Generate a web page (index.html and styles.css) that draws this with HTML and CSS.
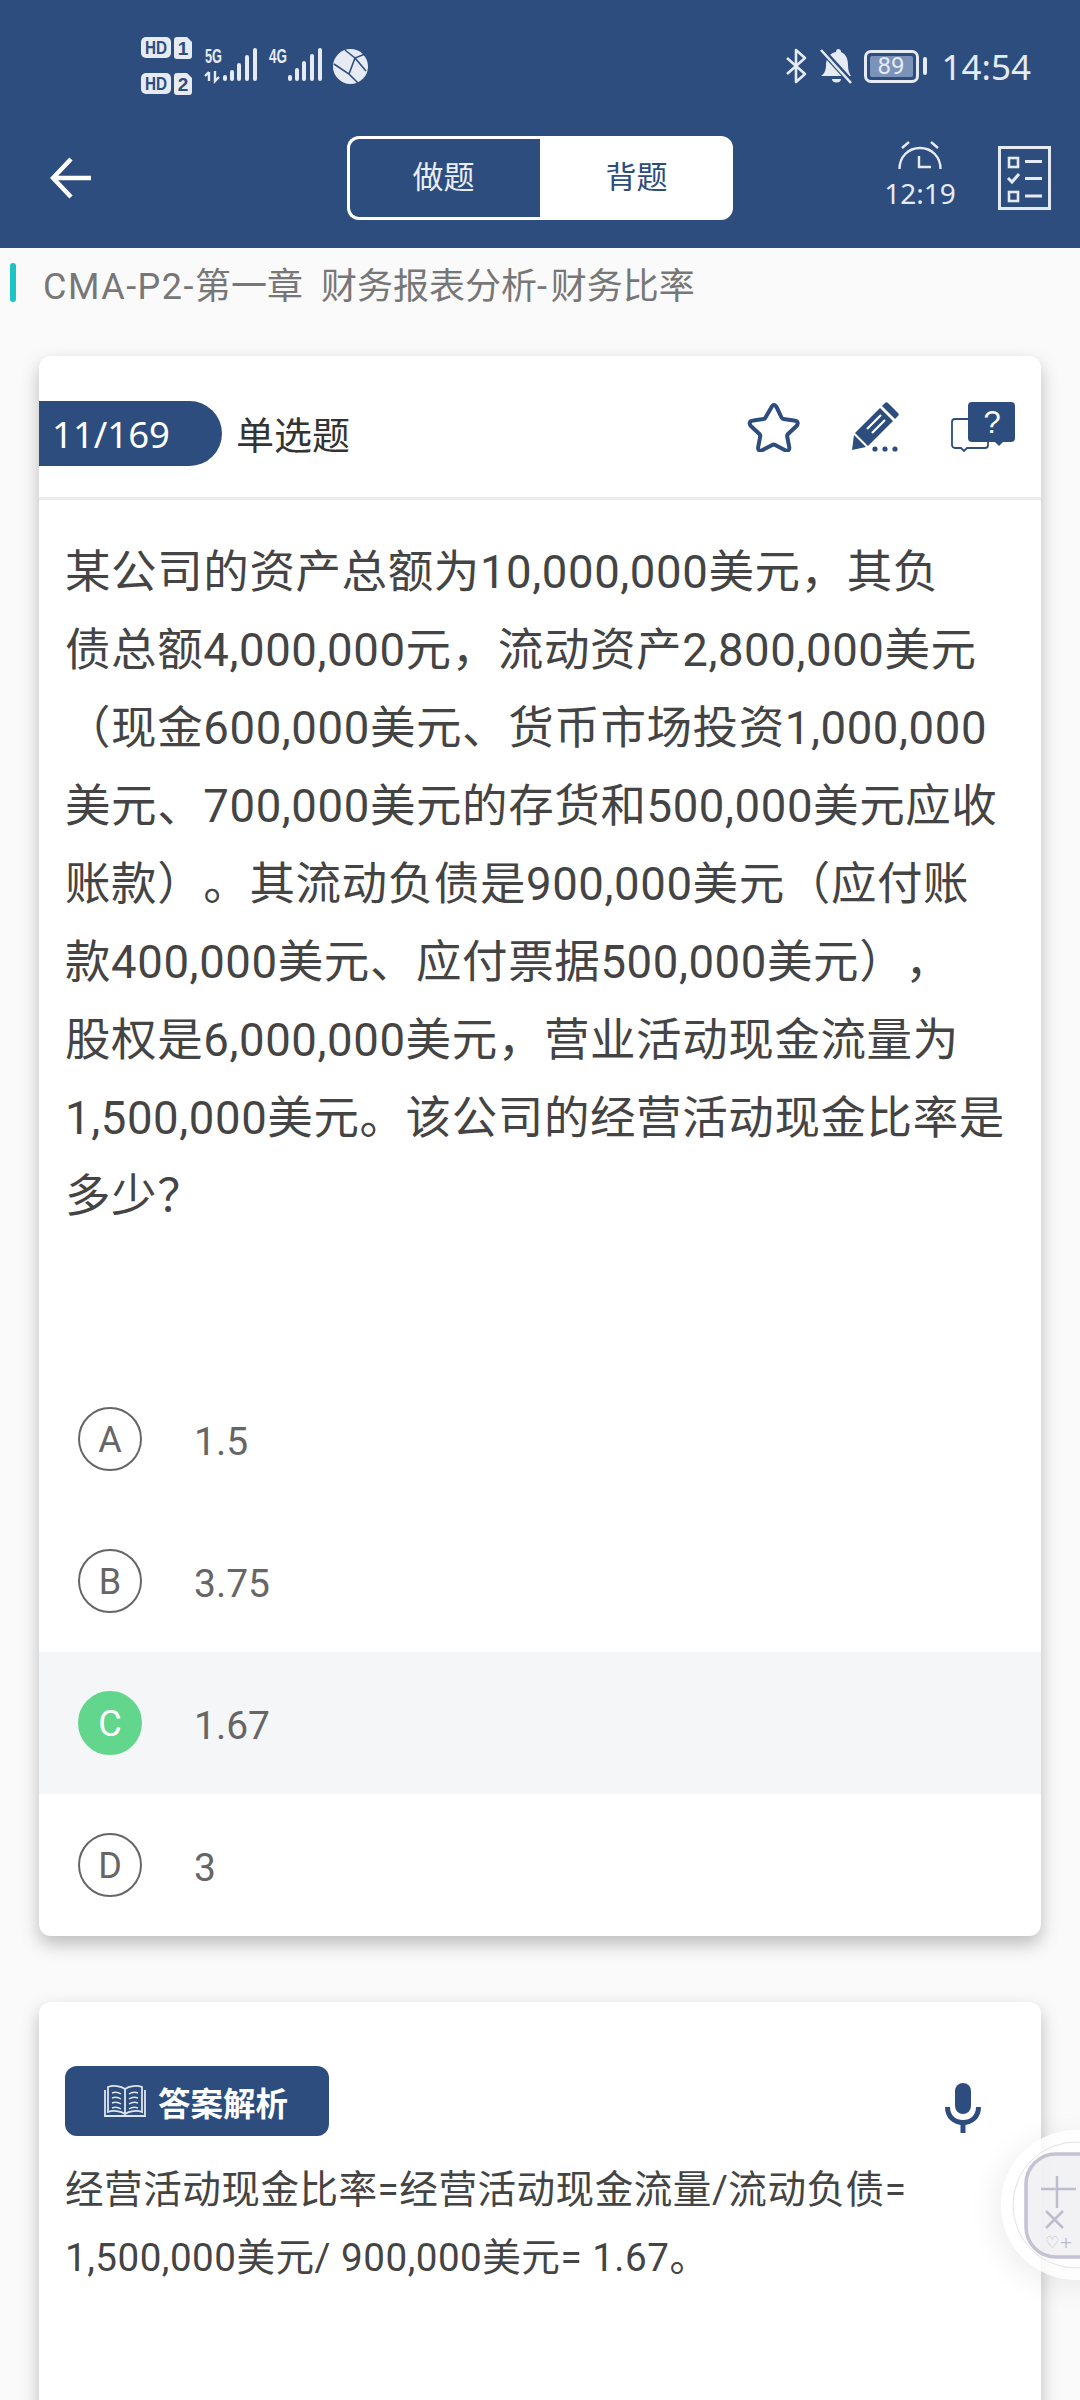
FILE: index.html
```html
<!DOCTYPE html>
<html lang="zh-CN">
<head>
  <meta charset="UTF-8" />
  <meta name="viewport" content="width=device-width, initial-scale=1.0"/>
  <title>CMA-P2 财务比率</title>
  <link rel="stylesheet" href="styles.css">
</head>
<body>
  <div class="header">
    <!-- status bar -->
    <div class="status-bar">
      <svg class="sim-badges" width="51" height="60" viewBox="0 0 51 60">
        <rect x="0" y="1" width="30" height="21" rx="5" fill="#e6eaf2"/>
        <text x="15" y="18" class="sim-text" text-anchor="middle" textLength="22" lengthAdjust="spacingAndGlyphs">HD</text>
        <path d="M36 1h10l5 5v14a3 3 0 0 1-3 3H36a3 3 0 0 1-3-3V4a3 3 0 0 1 3-3z" fill="#e6eaf2"/>
        <text x="42" y="19" class="sim-text" text-anchor="middle">1</text>
        <rect x="0" y="37" width="30" height="21" rx="5" fill="#e6eaf2"/>
        <text x="15" y="54" class="sim-text" text-anchor="middle" textLength="22" lengthAdjust="spacingAndGlyphs">HD</text>
        <path d="M36 37h10l5 5v14a3 3 0 0 1-3 3H36a3 3 0 0 1-3-3V40a3 3 0 0 1 3-3z" fill="#e6eaf2"/>
        <text x="42" y="55" class="sim-text" text-anchor="middle">2</text>
      </svg>
      <svg class="signal" width="53" height="36" viewBox="0 0 53 36">
        <text x="1" y="15" class="net-text" textLength="17" lengthAdjust="spacingAndGlyphs">5G</text>
        <path d="M5 33V24M1 28l4-4M11 23v10l4-4" fill="none" stroke="#e6eaf2" stroke-width="2.400"/>
        <rect x="19" y="27" width="4" height="6" rx="2" fill="#e6eaf2"/>
        <rect x="26" y="22" width="4" height="11" rx="2" fill="#e6eaf2"/>
        <rect x="33" y="15" width="4" height="18" rx="2" fill="#e6eaf2"/>
        <rect x="41" y="7" width="4" height="26" rx="2" fill="#e6eaf2"/>
        <rect x="49" y="0" width="4" height="33" rx="2" fill="#e6eaf2"/>
      </svg>
      <svg class="signal signal-two" width="53" height="36" viewBox="0 0 53 36">
        <text x="0" y="15" class="net-text" textLength="18" lengthAdjust="spacingAndGlyphs">4G</text>
        <rect x="19" y="27" width="4" height="6" rx="2" fill="#e6eaf2"/>
        <rect x="26" y="20" width="4" height="13" rx="2" fill="#e6eaf2"/>
        <rect x="33" y="13" width="4" height="20" rx="2" fill="#e6eaf2"/>
        <rect x="41" y="6" width="4" height="27" rx="2" fill="#e6eaf2"/>
        <rect x="49" y="0" width="4" height="33" rx="2" fill="#e6eaf2"/>
      </svg>
      <svg class="globe" width="35" height="35" viewBox="0 0 35 35">
        <circle cx="17.500" cy="17.500" r="17.500" fill="#e6eaf2"/>
        <path d="M1 15l15 10 9 9M16 25L22 9l10-4M22 9L12 1M22 9l11 13" fill="none" stroke="#2c4d7e" stroke-width="1.600"/>
      </svg>

      <div class="status-right">
        <svg class="bluetooth-icon" width="22" height="36" viewBox="0 0 22 36">
          <path d="M2 10l18 16-9 8V2l9 8L2 26" fill="none" stroke="#e6eaf2" stroke-width="2.600" stroke-linejoin="round"/>
        </svg>
        <svg class="bell-icon" width="32" height="36" viewBox="0 0 32 36">
          <path d="M1 28c3-2 5-5 5-11 0-7 4-12 10-13 0-2 1-3 2-3 2 0 3 1 3 3 5 2 7 7 7 13 0 5 1 8 3 11z" fill="#e6eaf2"/>
          <path d="M12 31h9a4.500 3.500 0 0 1-9 0z" fill="#e6eaf2"/>
          <path d="M0 0l31 34" stroke="#2c4d7e" stroke-width="6"/>
          <path d="M1 2l30 33" stroke="#e6eaf2" stroke-width="2.600"/>
        </svg>
        <div class="battery">
          <div class="battery-body"><span class="battery-level">89</span></div>
          <div class="battery-nub"></div>
        </div>
        <span class="status-time">14:54</span>
      </div>
    </div>

    <!-- toolbar -->
    <div class="toolbar">
      <svg class="back-icon" width="42" height="42" viewBox="0 0 42 42">
        <path d="M41 21H4M21 2L3 21l18 19" fill="none" stroke="#fff" stroke-width="4.500"/>
      </svg>
      <div class="mode-tabs">
        <div class="mode-tab">做题</div>
        <div class="mode-tab active">背题</div>
      </div>
      <div class="alarm">
        <svg width="44" height="30" viewBox="0 0 44 30">
          <path d="M1.500 28C1.500 16 10 7 22 7s20.500 9 20.500 21" fill="none" stroke="#e6eaf2" stroke-width="2.400"/>
          <path d="M4 7l7-6M40 7l-7-6" fill="none" stroke="#e6eaf2" stroke-width="2.400"/>
          <path d="M21 15v11h12" fill="none" stroke="#e6eaf2" stroke-width="2.400"/>
        </svg>
        <span class="alarm-time">12:19</span>
      </div>
      <svg class="list-icon" width="53" height="64" viewBox="0 0 53 64">
        <rect x="1.500" y="1.500" width="50" height="61" fill="none" stroke="#e6eaf2" stroke-width="3"/>
        <rect x="11" y="12" width="9" height="9" fill="none" stroke="#e6eaf2" stroke-width="2.600"/>
        <path d="M27 15.500h17M27 32.500h17M27 50h17" stroke="#e6eaf2" stroke-width="2.800"/>
        <path d="M10 32l4 4 7-8" fill="none" stroke="#e6eaf2" stroke-width="3"/>
        <rect x="11" y="46" width="9" height="9" fill="none" stroke="#e6eaf2" stroke-width="2.600"/>
      </svg>
    </div>
  </div>

  <div class="chapter">
    <div class="chapter-mark"></div>
    <div class="chapter-title"><span class="latin">CMA-P2-</span>第一章  财务报表分析<span class="dash">-</span>财务比率</div>
  </div>

  <div class="card question-card">
    <div class="question-head">
      <div class="question-no">11/169</div>
      <div class="question-type">单选题</div>
      <div class="question-tools">
        <svg width="54" height="50" viewBox="0 0 54 50">
          <path d="M27 3c1 0 2 1 3 3l4.500 9.500c.5 1 1 1.500 2 1.500l10.500 1.500c4 .5 5 3 2 6l-8 7.500c-.8.800-1 1.500-.8 2.500l2 10.500c.6 3.500-1.500 4.500-4 3.200l-10-5.200c-1-.5-2-.5-3 0l-10 5.200c-2.500 1.300-4.600.3-4-3.200l2-10.500c.2-1 0-1.700-.8-2.500l-8-7.500c-3-3-2-5.500 2-6L16.500 17c1 0 1.500-.5 2-1.500L24 6c1-2 2-3 3-3z" fill="none" stroke="#2c4d7e" stroke-width="4"/>
        </svg>
        <svg width="48" height="50" viewBox="0 0 48 50">
          <path d="M36 1l10 10c1 1 1 2 0 3l-3 3-13-13 3-3c1-1 2-1 3 0z" fill="#2c4d7e"/>
          <path d="M28 6l13 13-25 25-13-13z" fill="#2c4d7e"/>
          <path d="M2 33l12 12-14 3z" fill="#2c4d7e"/>
          <path d="M16 29l14-14M21 33l13-13" stroke="#fff" stroke-width="2.200" transform="translate(-1 -2)"/>
          <circle cx="23" cy="47" r="2.600" fill="#2c4d7e"/>
          <circle cx="33" cy="47" r="2.600" fill="#2c4d7e"/>
          <circle cx="43" cy="47" r="2.600" fill="#2c4d7e"/>
        </svg>
        <svg width="64" height="50" viewBox="0 0 64 50">
          <path d="M4 17h30a3 3 0 0 1 3 3v23a3 3 0 0 1-3 3H16l-3 3-3-3H4a3 3 0 0 1-3-3V20a3 3 0 0 1 3-3z" fill="#fff" stroke="#2c4d7e" stroke-width="1.800"/>
          <path d="M21 0h39a4 4 0 0 1 4 4v32a4 4 0 0 1-4 4H52l-4 4-4-4H21a4 4 0 0 1-4-4V4a4 4 0 0 1 4-4z" fill="#2c4d7e"/>
          <text x="41" y="31" class="help-mark" text-anchor="middle">?</text>
        </svg>
      </div>
    </div>

    <div class="question-text">某公司的资产总额为10,000,000美元，其负<br>债总额4,000,000元，流动资产2,800,000美元<br>（现金600,000美元、货币市场投资1,000,000<br>美元、700,000美元的存货和500,000美元应收<br>账款）。其流动负债是900,000美元（应付账<br>款400,000美元、应付票据500,000美元），<br>股权是6,000,000美元，营业活动现金流量为<br>1,500,000美元。该公司的经营活动现金比率是<br>多少？</div>

    <div class="options">
      <div class="option"><span class="option-key">A</span><span class="option-text">1.5</span></div>
      <div class="option"><span class="option-key">B</span><span class="option-text">3.75</span></div>
      <div class="option correct"><span class="option-key">C</span><span class="option-text">1.67</span></div>
      <div class="option"><span class="option-key">D</span><span class="option-text">3</span></div>
    </div>
  </div>

  <div class="card answer-card">
    <div class="answer-head">
      <div class="answer-badge">
        <svg width="42" height="34" viewBox="0 0 42 34">
          <path d="M21 5C17 2 9 1 4 3v25c5-2 13-1 17 2 4-3 12-4 17-2V3c-5-2-13-1-17 2zM21 5v25" fill="none" stroke="#dfe5ef" stroke-width="1.800"/>
          <path d="M1 6v26h40V6" fill="none" stroke="#dfe5ef" stroke-width="1.800"/>
          <path d="M8 9c3-1 6-1 9 1M8 14c3-1 6-1 9 1M8 19c3-1 6-1 9 1M8 24c3-1 6-1 9 1M34 9c-3-1-6-1-9 1M34 14c-3-1-6-1-9 1M34 19c-3-1-6-1-9 1M34 24c-3-1-6-1-9 1" fill="none" stroke="#dfe5ef" stroke-width="1.500"/>
        </svg>
        <span>答案解析</span>
      </div>
      <svg class="mic-icon" width="36" height="50" viewBox="0 0 36 50">
        <rect x="10" y="0" width="16" height="31" rx="8" fill="#2c4d7e"/>
        <path d="M2.500 24c0 10 7 15.500 15.500 15.500S33.500 34 33.500 24" fill="none" stroke="#2c4d7e" stroke-width="5"/>
        <rect x="15.500" y="38" width="5" height="12" fill="#2c4d7e"/>
      </svg>
    </div>
    <div class="answer-text">经营活动现金比率=经营活动现金流量/流动负债=<br>1,500,000美元/ 900,000美元= 1.67。</div>
  </div>

  <!-- floating tool over the page edge -->
  <div class="float-tool">
    <svg width="150" height="150" viewBox="0 0 150 150">
      <circle cx="75" cy="75" r="63" fill="none" stroke="#e3e3e6" stroke-width="1"/>
      <rect x="25" y="24" width="110" height="103" rx="30" fill="rgba(236,236,240,.7)" stroke="#c3c3d3" stroke-width="3.500"/>
      <path d="M56 46v32M40 59h35M45 81l17 17M62 81L45 98" fill="none" stroke="#bdbdce" stroke-width="2.500"/>
      <text x="44" y="118" class="float-text">♡+</text>
    </svg>
  </div>
</body>
</html>
```

FILE: styles.css
```css
html, body {
  margin: 0;
  padding: 0;
}

body {
  position: relative;
  width: 1080px;
  height: 2400px;
  overflow: hidden;
  background: #fafafa;
  font-family: Roboto, "Noto Sans CJK SC", sans-serif;
  color: #444;
  text-spacing-trim: space-all;
}

.header {
  background: #2c4d7e;
  height: 248px;
}

.status-bar {
  display: flex;
  align-items: center;
  height: 120px;
  padding: 12px 49px 0 141px;
  box-sizing: border-box;
  color: #e6eaf2;
}

.sim-text {
  font-family: "Liberation Sans", sans-serif;
  font-size: 19px;
  font-weight: 700;
  fill: #2c4d7e;
}

.net-text {
  font-family: "Liberation Sans", sans-serif;
  font-size: 20px;
  font-weight: 700;
  fill: #e6eaf2;
}

.sim-badges {
  margin-right: 12px;
  overflow: visible;
}

.signal {
  overflow: visible;
}

.signal-two {
  margin-left: 12px;
}

.globe {
  margin-left: 11px;
}

.status-right {
  display: flex;
  align-items: center;
  margin-left: auto;
}

.bell-icon {
  margin-left: 13px;
}

.battery {
  display: flex;
  align-items: center;
  margin-left: 12px;
}

.battery-body {
  display: flex;
  width: 55px;
  height: 33px;
  box-sizing: border-box;
  border: 3px solid #e6eaf2;
  border-radius: 7px;
  padding: 3px;
}

.battery-level {
  flex: 1;
  background: #7b93b8;
  border-radius: 2px;
  font-size: 24px;
  line-height: 21px;
  text-align: center;
}

.battery-nub {
  width: 4px;
  height: 18px;
  margin-left: 4px;
  border-radius: 2px;
  background: #e6eaf2;
}

.status-time {
  margin-left: 15px;
  font-family: "Noto Sans", sans-serif;
  font-size: 35px;
}

.toolbar {
  display: flex;
  align-items: center;
  height: 116px;
  padding-left: 50px;
}

.mode-tabs {
  display: flex;
  width: 386px;
  height: 84px;
  margin-left: 255px;
}

.mode-tab {
  flex: 1;
  box-sizing: border-box;
  padding-right: 3px;
  border: 3px solid #fff;
  border-right: 0;
  border-radius: 12px 0 0 12px;
  color: #e9edf4;
  font-size: 31px;
  line-height: 78px;
  text-align: center;
}

.mode-tab.active {
  padding-right: 0;
  border: 3px solid #fff;
  border-radius: 0 12px 12px 0;
  background: #fff;
  color: #2c4d7e;
}

.alarm {
  display: flex;
  flex-direction: column;
  align-items: center;
  width: 72px;
  margin: -4px 0 0 151px;
  color: #e6eaf2;
}

.alarm svg {
  margin-bottom: 4px;
}

.alarm-time {
  font-family: "Noto Sans", sans-serif;
  font-size: 28px;
  line-height: 36px;
}

.list-icon {
  margin-left: 42px;
}

.chapter {
  display: flex;
  height: 108px;
}

.chapter-mark {
  width: 6px;
  height: 39px;
  margin: 15px 0 0 10px;
  border-radius: 3px;
  background: #1cc4c4;
}

.chapter-title {
  margin: 15px 0 0 27px;
  color: #777;
  font-size: 36px;
  line-height: 48px;
  white-space: pre;
}

.chapter-title .latin {
  letter-spacing: 1.5px;
}

.chapter-title .dash {
  letter-spacing: 4px;
}

.card {
  width: 1002px;
  margin-left: 39px;
  background: #fff;
  border-radius: 12px;
  box-shadow: 0 8px 18px rgba(0, 0, 0, 0.25);
}

.question-card {
  height: 1580px;
}

.question-head {
  display: flex;
  align-items: center;
  height: 144px;
  padding: 13px 26px 0 0;
  box-sizing: border-box;
  border-bottom: 3px solid #ececec;
}

.question-no {
  width: 183px;
  height: 65px;
  padding-left: 13px;
  box-sizing: border-box;
  border-radius: 0 33px 33px 0;
  background: #2c4d7e;
  color: #fff;
  font-family: "Noto Sans", sans-serif;
  font-size: 36.5px;
  line-height: 66px;
}

.question-type {
  margin: -2px 0 0 14px;
  color: #333;
  font-size: 38px;
}

.question-tools {
  display: flex;
  align-items: center;
  margin-top: -13px;
  margin-left: auto;
}

.question-tools svg + svg {
  margin-left: 51px;
}

.help-mark {
  font-family: "Liberation Sans", sans-serif;
  font-size: 31px;
  fill: #fff;
}

.question-text {
  padding: 34px 0 0 26px;
  font-size: 45.5px;
  letter-spacing: 0.6px;
  line-height: 78px;
  white-space: nowrap;
}

.options {
  margin-top: 132px;
}

.option {
  display: flex;
  align-items: center;
  height: 142px;
  padding-left: 39px;
  color: #666;
}

.option.correct {
  background: #f5f6f8;
}

.option-key {
  width: 64px;
  height: 64px;
  box-sizing: border-box;
  border: 2.5px solid #666;
  border-radius: 50%;
  font-size: 36px;
  line-height: 63px;
  text-align: center;
}

.correct .option-key {
  border-color: #62d68c;
  background: #62d68c;
  color: #fff;
}

.option-text {
  margin-left: 52px;
  padding-top: 5px;
  font-size: 39px;
}

.answer-card {
  height: 600px;
  margin-top: 66px;
  padding: 64px 60px 0 26px;
  box-sizing: border-box;
}

.answer-head {
  display: flex;
  align-items: flex-start;
  justify-content: space-between;
}

.answer-badge {
  display: flex;
  align-items: center;
  width: 264px;
  height: 70px;
  padding-left: 39px;
  box-sizing: border-box;
  border-radius: 12px;
  background: #2c4d7e;
  color: #fff;
  font-size: 32.5px;
  font-weight: 700;
}

.answer-badge span {
  margin-left: 12px;
}

.mic-icon {
  margin-top: 17px;
}

.answer-text {
  margin-top: 20px;
  font-size: 38.6px;
  letter-spacing: 0.5px;
  line-height: 68px;
  white-space: nowrap;
}

.float-tool {
  position: absolute;
  left: 1001px;
  top: 2130px;
  width: 150px;
  height: 150px;
  border-radius: 50%;
  background: rgba(255, 255, 255, 0.8);
  box-shadow: -6px 6px 30px rgba(0, 0, 0, 0.07);
}

.float-text {
  font-family: "DejaVu Sans", sans-serif;
  font-size: 16px;
  fill: #bdbdce;
}
```
